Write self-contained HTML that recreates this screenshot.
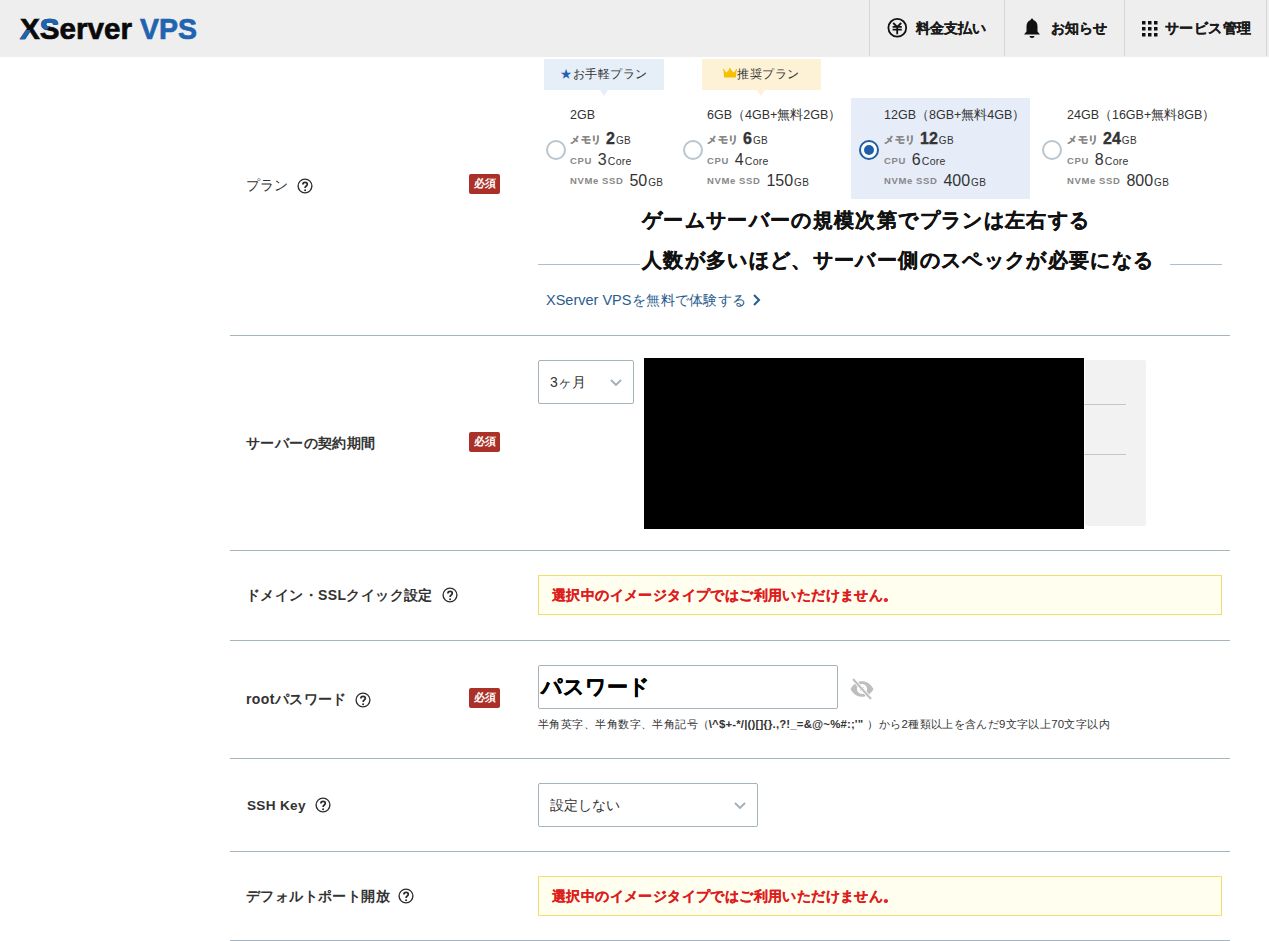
<!DOCTYPE html>
<html lang="ja"><head><meta charset="utf-8">
<style>
*{box-sizing:border-box;margin:0;padding:0}
html,body{width:1269px;height:941px;overflow:hidden;background:#fff}
body{font-family:"Liberation Sans",sans-serif;color:#333;position:relative}
.a{position:absolute;white-space:nowrap}
#hdr{position:absolute;left:0;top:0;width:1269px;height:57px;background:#eeeeee}
.sep{position:absolute;top:0;width:1px;height:56px;background:#d6d6d6}
.nav{position:absolute;top:19px;font-size:14px;font-weight:bold;color:#1a1a1a;line-height:18px;-webkit-text-stroke:.2px #1a1a1a}
.line{position:absolute;left:230px;width:1000px;height:1px;background:#a6b4be}
.lbl{position:absolute;left:246px;font-size:14px;font-weight:bold;color:#333;line-height:18px;white-space:nowrap;letter-spacing:.4px}
.help{position:absolute;width:16px;height:16px}
.req{position:absolute;left:469px;width:31px;height:20px;background:#ab3027;border-radius:2px;color:#fff;font-size:11px;font-weight:bold;line-height:18px;text-align:center}
.tag{position:absolute;top:59px;width:120px;height:31px;font-size:12px;letter-spacing:.55px;line-height:30px;color:#333;text-align:center}
.tag:after{content:"";position:absolute;left:56px;top:31px;border-left:4.5px solid transparent;border-right:4.5px solid transparent;border-top:6px solid #e6eef8}
.tag.y:after{border-top-color:#fdf2d6;left:55px}
.radio{position:absolute;top:140px;width:20px;height:20px;border-radius:50%;border:2px solid #b9c5cf;background:#fff}
.ttl{position:absolute;top:107px;font-size:12.5px;color:#333;line-height:16px}
.sp{position:absolute;color:#333;line-height:20px;white-space:nowrap}
.k1{font-size:10px;font-weight:bold;color:#888;margin-right:4.5px;position:relative;top:-1px;letter-spacing:.5px;-webkit-text-stroke:.3px #888}
.k2{font-size:9.5px;font-weight:bold;color:#888;letter-spacing:.6px;margin-right:6px;position:relative}
.n{font-size:16px;color:#333}
b.n{-webkit-text-stroke:.35px #333}
.u{font-size:10px;letter-spacing:.3px;margin-left:1px}
.u2{font-size:10.5px;letter-spacing:.3px;margin-left:1px}
.warn{position:absolute;left:538px;width:684px;height:40px;background:#fffeef;border:1px solid #efe06e;color:#dd1c1c;font-weight:bold;font-size:14px;line-height:38px;padding-left:13px;letter-spacing:.4px;-webkit-text-stroke:.15px #dd1c1c}
.sel{position:absolute;left:538px;height:44px;border:1px solid #a5b3bd;border-radius:2px;background:#fff;font-size:14px;color:#333;line-height:42px;padding-left:11px}
.chev{position:absolute;width:12px;height:8px}
</style></head><body>
<div id="hdr">
<svg style="position:absolute;left:0;top:0" width="240" height="57" viewBox="0 0 240 57">
<defs>
<clipPath id="cx"><polygon points="8,46 8,30 29.5,30 29.5,28.5 33,46"/></clipPath>
<clipPath id="cs"><polygon points="38,10 58.5,10 58.5,25 51,25 47,29.5 38,29.5"/></clipPath>
</defs>
<g font-family="Liberation Sans" font-weight="bold" font-size="30" >
<text id="lg1" x="20" y="39" fill="#0a0a0a" stroke="#0a0a0a" stroke-width=".7" textLength="112" lengthAdjust="spacingAndGlyphs">XServer</text>
<g clip-path="url(#cx)"><text x="20" y="39" fill="#1f64b0" stroke="#1f64b0" stroke-width=".7" textLength="112" lengthAdjust="spacingAndGlyphs">XServer</text></g>
<g clip-path="url(#cs)"><text x="20" y="39" fill="#1f64b0" stroke="#1f64b0" stroke-width=".7" textLength="112" lengthAdjust="spacingAndGlyphs">XServer</text></g>
<text x="140" y="39" fill="#1f64b0" stroke="#1f64b0" stroke-width=".7" textLength="57" lengthAdjust="spacingAndGlyphs">VPS</text>
</g>
</svg>
<div class="sep" style="left:869px"></div>
<div class="sep" style="left:1004px"></div>
<div class="sep" style="left:1124px"></div>
<div class="sep" style="left:1266px"></div>
<svg style="position:absolute;left:886px;top:17px" width="22" height="22" viewBox="0 0 22 22">
<circle cx="11.3" cy="10.8" r="8.9" fill="none" stroke="#111" stroke-width="1.8"/>
<path d="M7.2 6 L11.2 10 L15.2 6 M11.2 10 V17.2 M6.6 9.9 H15.8 M6.6 12.7 H15.8" fill="none" stroke="#111" stroke-width="1.8"/>
</svg>
<div class="nav" style="left:916px">料金支払い</div>
<svg style="position:absolute;left:1022px;top:17px" width="20" height="22" viewBox="0 0 20 22">
<path d="M10 1.5 c1 0 1.3 .8 1.3 1.5 c3 .8 4.2 3.4 4.2 6.5 v5 l2.5 3 H2 l2.5-3 v-5 c0-3.1 1.2-5.7 4.2-6.5 c0-.7 .3-1.5 1.3-1.5z" fill="#111"/>
<path d="M7.5 19 h5 a2.5 2 0 0 1-5 0z" fill="#111"/>
</svg>
<div class="nav" style="left:1051px">お知らせ</div>
<svg style="position:absolute;left:1142px;top:21px" width="16" height="16" viewBox="0 0 16 16" fill="#111">
<rect x="0" y="0" width="3.5" height="3.5"/><rect x="6" y="0" width="3.5" height="3.5"/><rect x="12" y="0" width="3.5" height="3.5"/>
<rect x="0" y="6" width="3.5" height="3.5"/><rect x="6" y="6" width="3.5" height="3.5"/><rect x="12" y="6" width="3.5" height="3.5"/>
<rect x="0" y="12" width="3.5" height="3.5"/><rect x="6" y="12" width="3.5" height="3.5"/><rect x="12" y="12" width="3.5" height="3.5"/>
</svg>
<div class="nav" style="left:1165px;letter-spacing:.45px">サービス管理</div>
</div>

<!-- row lines -->
<div class="line" style="top:335px"></div>
<div class="line" style="top:550px"></div>
<div class="line" style="top:640px"></div>
<div class="line" style="top:758px"></div>
<div class="line" style="top:851px"></div>
<div class="line" style="top:940px"></div>

<!-- ROW 1: plan -->
<div class="lbl" style="top:176px;font-weight:normal;letter-spacing:0">プラン</div>
<svg class="help" style="left:297px;top:178px" viewBox="0 0 16 16"><circle cx="8" cy="8" r="6.9" fill="none" stroke="#2b2b2b" stroke-width="1.35"/><path d="M5.9 6.4 C5.9 5.1 6.8 4.4 8.1 4.4 C9.4 4.4 10.3 5.2 10.3 6.3 C10.3 7.3 9.6 7.8 9 8.2 C8.4 8.6 8.1 9 8.1 10" fill="none" stroke="#2b2b2b" stroke-width="1.7"/><circle cx="8.1" cy="12.2" r="1" fill="#2b2b2b"/></svg>
<div class="req" style="top:174px">必須</div>

<div class="tag" style="left:544px;background:#e6eef8"><span style="color:#1f64b0">★</span>お手軽プラン</div>
<div class="tag y" style="left:702px;width:119px;background:#fdf2d6;padding-right:0px"><svg width="14" height="10" viewBox="0 0 14 10" style="vertical-align:0"><path d="M0.3 1.6 L3.6 4.6 L7 0.6 L10.4 4.6 L13.7 1.6 L12.8 9.6 H1.2Z" fill="#f6c100"/><circle cx="7" cy="0.9" r=".9" fill="#f6c100"/><circle cx=".6" cy="1.7" r=".8" fill="#f6c100"/><circle cx="13.4" cy="1.7" r=".8" fill="#f6c100"/></svg>推奨プラン</div>

<!-- cards -->
<div class="a" style="left:851px;top:98px;width:179px;height:101px;background:#e6edf8"></div>

<div class="radio" style="left:546px"></div>
<div class="ttl" style="left:570px">2GB</div>
<div class="sp" style="left:570px;top:129px"><span class="k1">メモリ</span><b class="n">2</b><span class="u">GB</span></div>
<div class="sp" style="left:570px;top:150px"><span class="k2" style="top:-1px">CPU</span><span class="n">3</span><span class="u2">Core</span></div>
<div class="sp" style="left:570px;top:171px"><span class="k2" style="top:-2px">NVMe SSD</span><span class="n">50</span><span class="u">GB</span></div>

<div class="radio" style="left:683px"></div>
<div class="ttl" style="left:707px">6GB（4GB+無料2GB）</div>
<div class="sp" style="left:707px;top:129px"><span class="k1">メモリ</span><b class="n">6</b><span class="u">GB</span></div>
<div class="sp" style="left:707px;top:150px"><span class="k2" style="top:-1px">CPU</span><span class="n">4</span><span class="u2">Core</span></div>
<div class="sp" style="left:707px;top:171px"><span class="k2" style="top:-2px">NVMe SSD</span><span class="n">150</span><span class="u">GB</span></div>

<div class="radio" style="left:859px;border-color:#1f5ea8;"><div style="position:absolute;left:3px;top:3px;width:10px;height:10px;border-radius:50%;background:#1f5ea8"></div></div>
<div class="ttl" style="left:884px">12GB（8GB+無料4GB）</div>
<div class="sp" style="left:884px;top:129px"><span class="k1">メモリ</span><b class="n">12</b><span class="u">GB</span></div>
<div class="sp" style="left:884px;top:150px"><span class="k2" style="top:-1px">CPU</span><span class="n">6</span><span class="u2">Core</span></div>
<div class="sp" style="left:884px;top:171px"><span class="k2" style="top:-2px">NVMe SSD</span><span class="n">400</span><span class="u">GB</span></div>

<div class="radio" style="left:1042px"></div>
<div class="ttl" style="left:1067px">24GB（16GB+無料8GB）</div>
<div class="sp" style="left:1067px;top:129px"><span class="k1">メモリ</span><b class="n">24</b><span class="u">GB</span></div>
<div class="sp" style="left:1067px;top:150px"><span class="k2" style="top:-1px">CPU</span><span class="n">8</span><span class="u2">Core</span></div>
<div class="sp" style="left:1067px;top:171px"><span class="k2" style="top:-2px">NVMe SSD</span><span class="n">800</span><span class="u">GB</span></div>

<div class="a" style="left:538px;top:264px;width:102px;height:1px;background:#a9bfcc"></div>
<div class="a" style="left:1170px;top:264px;width:52px;height:1px;background:#a9bfcc"></div>
<div class="a" style="left:642px;top:207px;font-size:20px;letter-spacing:1.35px;font-weight:bold;color:#111;line-height:26px;-webkit-text-stroke:.3px #111">ゲームサーバーの規模次第でプランは左右する</div>
<div class="a" style="left:642px;top:247px;font-size:20px;letter-spacing:1.35px;font-weight:bold;color:#111;line-height:26px;-webkit-text-stroke:.3px #111">人数が多いほど、サーバー側のスペックが必要になる</div>
<div class="a" style="left:546px;top:291px;font-size:14.5px;color:#2a5d8f;line-height:18px">XServer VPS<span style="font-size:14px;margin-left:.5px;letter-spacing:.3px">を無料で体験する</span><svg width="10" height="12" viewBox="0 0 10 12" style="vertical-align:-1px;margin-left:6px"><path d="M2 .9 L7 6 L2 11.1" fill="none" stroke="#2a5d8f" stroke-width="2.1"/></svg></div>

<!-- ROW 2 -->
<div class="lbl" style="top:434px">サーバーの契約期間</div>
<div class="req" style="top:432px">必須</div>
<div class="sel" style="top:360px;width:96px">3ヶ月<svg class="chev" style="left:71px;top:18px" viewBox="0 0 12 8"><path d="M1 1 L6 6 L11 1" fill="none" stroke="#a3adb7" stroke-width="1.8"/></svg></div>
<div class="a" style="left:1085px;top:360px;width:61px;height:166px;background:#f2f2f2;border-radius:2px"></div>
<div class="a" style="left:1080px;top:404px;width:46px;height:1px;background:#c6c6c6"></div>
<div class="a" style="left:1080px;top:454px;width:46px;height:1px;background:#c6c6c6"></div>
<div class="a" style="left:644px;top:358px;width:440px;height:171px;background:#000"></div>

<!-- ROW 3 -->
<div class="lbl" style="top:586px">ドメイン・SSLクイック設定</div>
<svg class="help" style="left:442px;top:587px" viewBox="0 0 16 16"><circle cx="8" cy="8" r="6.9" fill="none" stroke="#2b2b2b" stroke-width="1.35"/><path d="M5.9 6.4 C5.9 5.1 6.8 4.4 8.1 4.4 C9.4 4.4 10.3 5.2 10.3 6.3 C10.3 7.3 9.6 7.8 9 8.2 C8.4 8.6 8.1 9 8.1 10" fill="none" stroke="#2b2b2b" stroke-width="1.7"/><circle cx="8.1" cy="12.2" r="1" fill="#2b2b2b"/></svg>
<div class="warn" style="top:575px">選択中のイメージタイプではご利用いただけません。</div>

<!-- ROW 4 -->
<div class="lbl" style="top:690px">rootパスワード</div>
<svg class="help" style="left:355px;top:692px" viewBox="0 0 16 16"><circle cx="8" cy="8" r="6.9" fill="none" stroke="#2b2b2b" stroke-width="1.35"/><path d="M5.9 6.4 C5.9 5.1 6.8 4.4 8.1 4.4 C9.4 4.4 10.3 5.2 10.3 6.3 C10.3 7.3 9.6 7.8 9 8.2 C8.4 8.6 8.1 9 8.1 10" fill="none" stroke="#2b2b2b" stroke-width="1.7"/><circle cx="8.1" cy="12.2" r="1" fill="#2b2b2b"/></svg>
<div class="req" style="top:688px">必須</div>
<div class="a" style="left:538px;top:665px;width:300px;height:44px;border:1px solid #a5b3bd;border-radius:2px;background:#fff"></div>
<div class="a" style="left:541px;top:673px;font-size:21px;font-weight:bold;color:#000;line-height:28px;-webkit-text-stroke:.3px #000">パスワード</div>
<svg class="a" style="left:849px;top:677px" width="26" height="24" viewBox="0 0 26 24"><path d="M1.5 12 C4.5 6.5 8.5 4.2 13 4.2 C17.5 4.2 21.5 6.5 24.5 12 C21.5 17.5 17.5 19.8 13 19.8 C8.5 19.8 4.5 17.5 1.5 12Z M13 7 a5 5 0 1 0 .01 0z" fill="#bebebe" fill-rule="evenodd"/><circle cx="13" cy="12" r="2.3" fill="#bebebe"/><path d="M4 2 L22 22" stroke="#fff" stroke-width="3.6"/><path d="M4 2 L22 22" stroke="#bebebe" stroke-width="2"/></svg>
<div class="a" style="left:538px;top:717px;font-size:11.4px;color:#333;line-height:14px"><span style="letter-spacing:.45px">半角英字、半角数字、半角記号（</span><b style="letter-spacing:.17px;margin-left:-1px">\^$+-*/|()[]{}.,?!_=&amp;@~%#:;'"</b><span style="letter-spacing:.35px"><span style="margin-left:4px;margin-right:.2px">）</span>から2種類以上を含んだ9文字以上70文字以内</span></div>

<!-- ROW 5 -->
<div class="lbl" style="top:797px;left:247px;font-size:13.6px;letter-spacing:.3px">SSH Key</div>
<svg class="help" style="left:315px;top:797px" viewBox="0 0 16 16"><circle cx="8" cy="8" r="6.9" fill="none" stroke="#2b2b2b" stroke-width="1.35"/><path d="M5.9 6.4 C5.9 5.1 6.8 4.4 8.1 4.4 C9.4 4.4 10.3 5.2 10.3 6.3 C10.3 7.3 9.6 7.8 9 8.2 C8.4 8.6 8.1 9 8.1 10" fill="none" stroke="#2b2b2b" stroke-width="1.7"/><circle cx="8.1" cy="12.2" r="1" fill="#2b2b2b"/></svg>
<div class="sel" style="top:783px;width:220px">設定しない<svg class="chev" style="left:195px;top:18px" viewBox="0 0 12 8"><path d="M1 1 L6 6 L11 1" fill="none" stroke="#a3adb7" stroke-width="1.8"/></svg></div>

<!-- ROW 6 -->
<div class="lbl" style="top:887px">デフォルトポート開放</div>
<svg class="help" style="left:398px;top:888px" viewBox="0 0 16 16"><circle cx="8" cy="8" r="6.9" fill="none" stroke="#2b2b2b" stroke-width="1.35"/><path d="M5.9 6.4 C5.9 5.1 6.8 4.4 8.1 4.4 C9.4 4.4 10.3 5.2 10.3 6.3 C10.3 7.3 9.6 7.8 9 8.2 C8.4 8.6 8.1 9 8.1 10" fill="none" stroke="#2b2b2b" stroke-width="1.7"/><circle cx="8.1" cy="12.2" r="1" fill="#2b2b2b"/></svg>
<div class="warn" style="top:876px">選択中のイメージタイプではご利用いただけません。</div>
</body></html>
